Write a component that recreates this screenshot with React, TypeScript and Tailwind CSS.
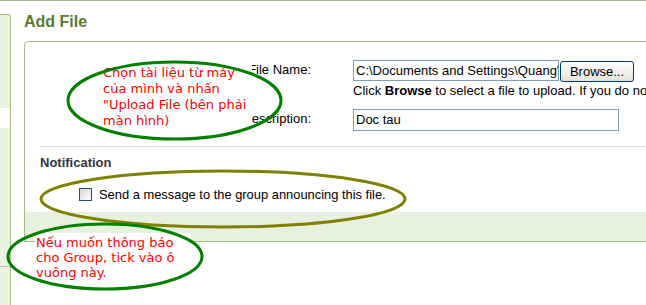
import React from 'react';

const sans = { fontFamily: '"Liberation Sans", Arial, sans-serif' };

export default function App() {
  return (
    <div
      className="relative w-[646px] h-[305px] overflow-hidden bg-white text-black"
      style={sans}
    >
      {/* top rule */}
      <div className="h-px bg-[#a3bd88]" />

      <div className="flex">
        {/* left nav strip */}
        <aside className="mt-[13px] w-[11px] h-[291px] shrink-0 flex flex-col rounded-tr-[4px] border-r border-t border-[#a3bd88] bg-[#ebf2e2]">
          <div className="h-[93px]" />
          <div className="h-[20px] bg-white" />
          <div className="h-[138px]" />
          <div className="h-px bg-[#b9c4ae]" />
        </aside>

        <main className="ml-[13px] flex-1 min-w-0">
          <h1 className="mt-[11px] h-[20px] leading-[20px] text-[16px] font-bold text-[#5a7a32]">
            Add File
          </h1>

          <section className="mt-[9px] w-[700px] rounded-tl-[4px] border border-[#a3bd88]">
            {/* file row */}
            <div className="mt-[18px] flex items-start">
              <label className="w-[286px] shrink-0 text-right text-[13px] leading-[16px] pt-[2px]">
                File Name:
              </label>
              <div className="ml-[42px] flex flex-col min-w-0">
                <div className="flex items-start">
                  <div className="w-[206px] h-[21px] shrink-0 border border-[#7f9db9] px-[2px] text-[13px] leading-[19px] whitespace-nowrap overflow-hidden">
                    C:\Documents and Settings\Quang\My Documents\Doc tau.doc
                  </div>
                  <button className="ml-[1px] mt-[1px] w-[74px] h-[21px] shrink-0 rounded-[3px] border border-[#003c74] bg-gradient-to-b from-white to-[#e6e3d6] text-[13px] leading-[19px] text-center">
                    Browse...
                  </button>
                </div>
                <p className="mt-[1px] text-[13px] leading-[15px] whitespace-nowrap">
                  Click <b>Browse</b> to select a file to upload. If you do not see the Browse button
                </p>
              </div>
            </div>

            {/* description row */}
            <div className="mt-[11px] flex items-start">
              <label className="w-[286px] shrink-0 text-right text-[13px] leading-[16px] pt-[2px]">
                Description:
              </label>
              <div className="ml-[42px] w-[266px] h-[22px] shrink-0 border border-[#7f9db9] px-[2px] text-[13px] leading-[20px]">
                Doc tau
              </div>
            </div>

            <div className="mt-[15px] ml-[15px] h-px bg-[#d5dde6]" />

            <h2 className="mt-[8px] ml-[15px] text-[13px] leading-[16px] font-bold text-[#353545]">
              Notification
            </h2>

            <div className="mt-[15px] h-[17px] pl-[54px] flex items-center">
              <span className="w-[13px] h-[13px] shrink-0 border border-[#1c5180] bg-gradient-to-br from-[#d8d8d2] to-white" />
              <span className="ml-[7px] text-[12.9px] leading-[17px]">
                Send a message to the group announcing this file.
              </span>
            </div>

            <div className="mt-[9px] h-[29px] bg-[#e8f1df]" />
          </section>
        </main>
      </div>

      {/* annotations drawn over the screenshot */}
      <div
        className="absolute left-[101px] top-[62px] w-[151px] h-[68px] bg-white pl-[2px] pt-[3px] text-[13px] leading-[16px] text-[#ff0000]"
        style={{ fontFamily: '"DejaVu Sans", Verdana, sans-serif' }}
      >
        Chọn tài liệu từ máy
        <br />
        của mình và nhấn
        <br />
        "Upload File (bên phải
        <br />
        màn hình)
      </div>

      <div
        className="absolute left-[35px] top-[233px] w-[156px] h-[50px] bg-white pl-[1px] pt-[2px] text-[13px] leading-[15px] text-[#ff0000]"
        style={{ fontFamily: '"DejaVu Sans", Verdana, sans-serif' }}
      >
        Nếu muốn thông báo
        <br />
        cho Group, tick vào ô
        <br />
        vuông này.
      </div>

      <svg className="absolute inset-0 pointer-events-none" width="646" height="305">
        <ellipse cx="174.5" cy="100.5" rx="106.5" ry="38.5" fill="none" stroke="#008000" strokeWidth="3" />
        <ellipse cx="223" cy="199" rx="182" ry="28" fill="none" stroke="#808000" strokeWidth="3" />
        <ellipse cx="105" cy="256.5" rx="97" ry="32.5" fill="none" stroke="#008000" strokeWidth="3" />
      </svg>
    </div>
  );
}
